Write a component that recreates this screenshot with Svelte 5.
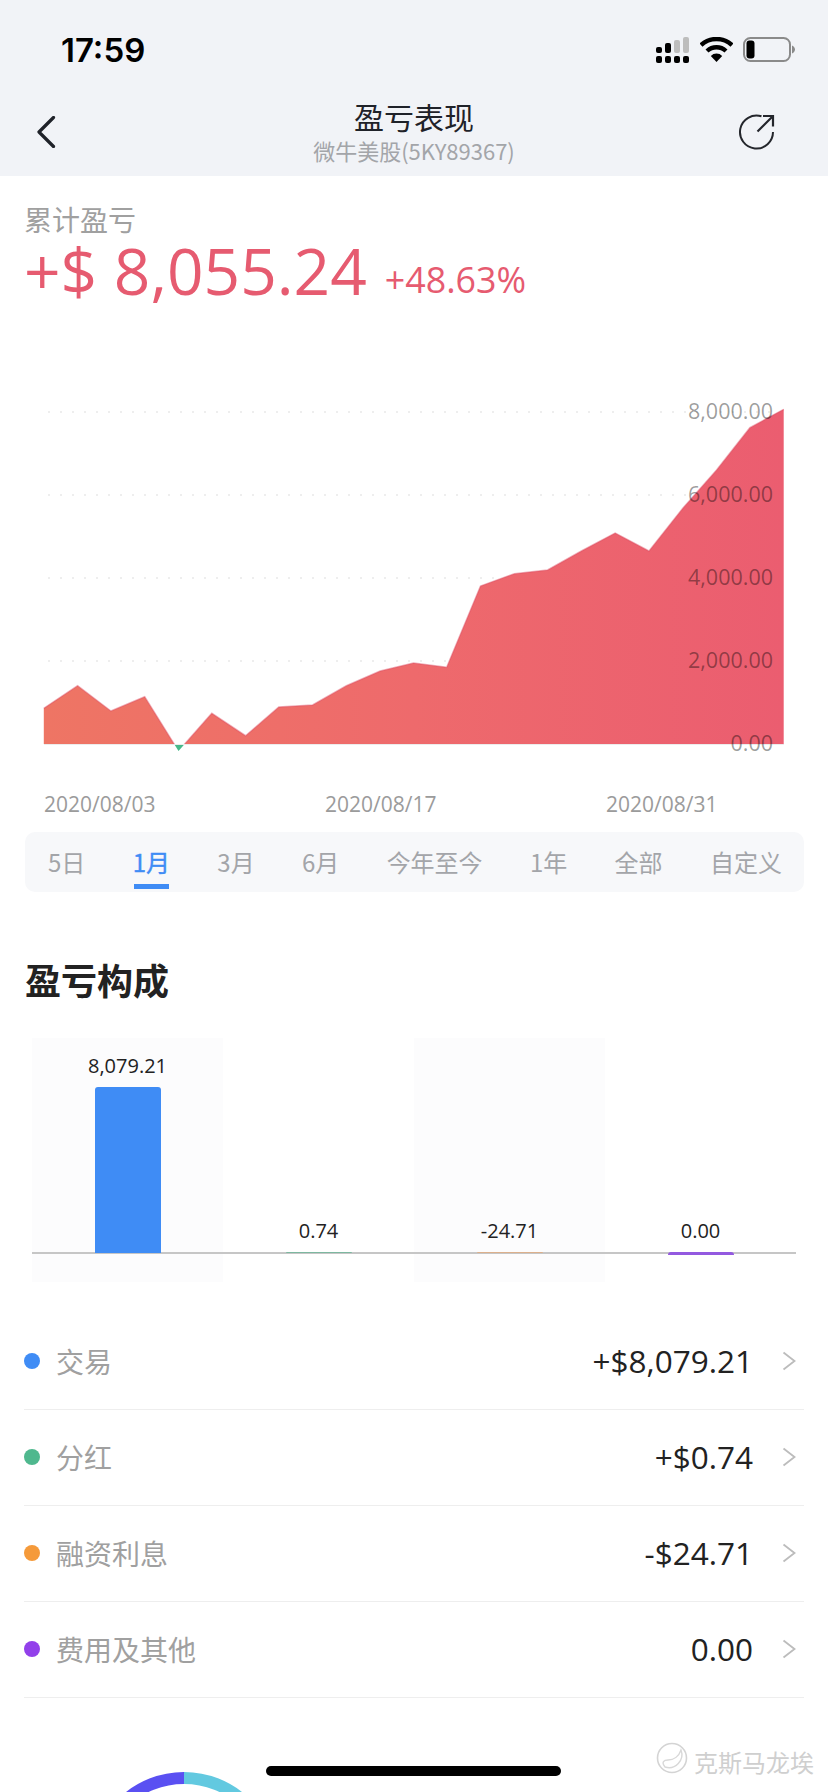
<script>
  const raw = [[83,985],[147,917],[210,993],[274,950],[338,1113],[401,1000],[465,1067],[528,981],[592,975],[656,917],[720,873],[783,849],[846,862],[910,618],[974,581],[1037,570],[1101,513],[1165,459],[1229,513],[1293,385],[1357,270],[1420,143],[1484,88]];
  // chart svg starts at page y=400
  const pts = raw.map(([x, y]) => [+(x / 1.8937).toFixed(1), +(380 + y / 3 - 400).toFixed(1)]);
  const base = 344;
  const ridge = pts.map((p) => `${p[0]},${p[1]}`).join(' ');
  const area = `M${pts[0][0]},${base} ` + pts.map((p) => `L${p[0]},${p[1]}`).join(' ') + ` L${pts[pts.length - 1][0]},${base} Z`;
  const axis = [['8,000.00', 12], ['6,000.00', 95], ['4,000.00', 178], ['2,000.00', 261], ['0.00', 344]];
  const dates = [['2020/08/03', 44], ['2020/08/17', 325], ['2020/08/31', 606]];
  const tabs = ['5日', '1月', '3月', '6月', '今年至今', '1年', '全部', '自定义'];
  const cols = [
    { label: '8,079.21', h: 166, drop: 0, color: '#3f8cf5', band: true },
    { label: '0.74', h: 1, drop: 0, color: '#7db8a0', band: false },
    { label: '-24.71', h: 1, drop: 0, color: '#dcb08c', band: true },
    { label: '0.00', h: 3, drop: 2, color: '#9359e0', band: false }
  ];
  const rows = [
    { name: '交易', value: '+$8,079.21', color: '#3f8cf5' },
    { name: '分红', value: '+$0.74', color: '#4fb88e' },
    { name: '融资利息', value: '-$24.71', color: '#f59a3a' },
    { name: '费用及其他', value: '0.00', color: '#9240ea' }
  ];
</script>

<div class="page">
  <header class="top">
    <div class="status">
      <span class="time">17:59</span>
      <div class="status-icons">
        <svg width="33" height="26" viewBox="0 0 33 26">
          <g fill="#000">
            <rect x="0" y="10" width="6" height="6" rx="2" />
            <rect x="9" y="6" width="6" height="10" rx="2" />
            <rect x="0" y="19" width="6" height="7" rx="2" />
            <rect x="9" y="19" width="6" height="7" rx="2" />
            <rect x="18" y="19" width="6" height="7" rx="2" />
            <rect x="27" y="19" width="6" height="7" rx="2" />
          </g>
          <g fill="#bdbdbd">
            <rect x="18" y="3" width="6" height="13" rx="2" />
            <rect x="27" y="0" width="6" height="16" rx="2" />
          </g>
        </svg>
        <svg class="wifi" width="33" height="25" viewBox="0 0 33 25">
          <path d="M1 8 A23 23 0 0 1 32 8" fill="none" stroke="#000" stroke-width="4.4" />
          <path d="M7 14 A14 14 0 0 1 26 14" fill="none" stroke="#000" stroke-width="4.4" />
          <path d="M16.5 25 L10.8 19 A8 8 0 0 1 22.2 19 Z" fill="#000" />
        </svg>
        <svg class="battery" width="52" height="25" viewBox="0 0 52 25">
          <rect x="1" y="1" width="46" height="23" rx="6.5" fill="none" stroke="#8a8a8a" stroke-width="2" />
          <rect x="3.5" y="3.5" width="8" height="18" rx="3" fill="#000" />
          <path d="M49 8.5 C51 9.5 52 11 52 12.5 C52 14 51 15.5 49 16.5 Z" fill="#8a8a8a" />
        </svg>
      </div>
    </div>
    <nav class="nav">
      <svg class="back" width="20" height="32" viewBox="0 0 20 32">
        <path d="M17.5 1.5 L3 16 L17.5 30.5" fill="none" stroke="#1f2229" stroke-width="3.2" stroke-linecap="round" stroke-linejoin="round" />
      </svg>
      <div class="nav-title">
        <div class="title">盈亏表现</div>
        <div class="subtitle">微牛美股(5KY89367)</div>
      </div>
      <svg class="share" width="38" height="38" viewBox="0 0 38 38">
        <path d="M23.5 4.3 A16.5 16.5 0 1 0 35 20" fill="none" stroke="#24262c" stroke-width="2" />
        <path d="M19.5 19.5 L35 4 M25 4 H35 V14.5" fill="none" stroke="#24262c" stroke-width="2.2" />
      </svg>
    </nav>
  </header>

  <section class="summary">
    <div class="sum-label">累计盈亏</div>
    <div class="sum-values">
      <span class="amount">+$ 8,055.24</span>
      <span class="percent">+48.63%</span>
    </div>
  </section>

  <svg class="chart" width="828" height="420" viewBox="0 0 828 420">
    <defs>
      <linearGradient id="areaGrad" x1="44" x2="784" y1="0" y2="0" gradientUnits="userSpaceOnUse">
        <stop offset="0" stop-color="#ee7564" />
        <stop offset="0.5" stop-color="#ee6a6c" />
        <stop offset="1" stop-color="#eb5d70" />
      </linearGradient>
      <clipPath id="above"><rect x="0" y="0" width="828" height={base} /></clipPath>
      <clipPath id="below"><rect x="0" y={base} width="828" height="40" /></clipPath>
    </defs>
    {#each axis as [, y]}
      {#if y !== base}
        <line x1="48" x2="780" y1={y} y2={y} stroke="#e9e9e9" stroke-width="1.5" stroke-dasharray="2 10" />
      {/if}
    {/each}
    <path d={area} fill="#47b98a" clip-path="url(#below)" />
    <path d={area} fill="url(#areaGrad)" clip-path="url(#above)" />
    <polyline points={ridge} fill="none" stroke="#dc4c62" stroke-opacity="0.45" stroke-width="1.5" clip-path="url(#above)" />
    <line x1="44" x2="784" y1={base + 0.5} y2={base + 0.5} stroke="#ececec" stroke-width="1" />
    {#each axis as [label, y]}
      <text class="axis-label" x="773" y={y + 7} text-anchor="end">{label}</text>
    {/each}
    {#each dates as [label, x]}
      <text class="date-label" x={x} y="412">{label}</text>
    {/each}
  </svg>

  <div class="tabs">
    {#each tabs as t, i}
      <span class="tab" class:active={i === 1}>{t}</span>
    {/each}
  </div>

  <h2 class="heading">盈亏构成</h2>

  <div class="bars">
    {#each cols as c}
      <div class="col" class:band={c.band}>
        <div class="bar-label">{c.label}</div>
        <div class="bar" style="height:{c.h}px;margin-bottom:{-c.drop}px;background:{c.color}"></div>
      </div>
    {/each}
  </div>

  <ul class="list">
    {#each rows as r}
      <li class="row">
        <span class="dot" style="background:{r.color}"></span>
        <span class="name">{r.name}</span>
        <span class="value">{r.value}</span>
        <svg class="chev" width="14" height="20" viewBox="0 0 14 20">
          <path d="M1.5 1.5 L12.5 10 L1.5 18.5" fill="none" stroke="#bcbcbc" stroke-width="1.8" />
        </svg>
      </li>
    {/each}
  </ul>

  <svg class="donut" width="188" height="188" viewBox="0 0 188 188">
    <path d="M94 6 A88 88 0 0 0 6 94" fill="none" stroke="#5a50f2" stroke-width="12" />
    <path d="M94 6 A88 88 0 0 1 182 94" fill="none" stroke="#62c9e0" stroke-width="12" />
  </svg>

  <div class="home"></div>

  <div class="watermark">
    <svg width="32" height="32" viewBox="0 0 32 32">
      <circle cx="16" cy="16" r="14.5" fill="none" stroke="#d4d4d4" stroke-width="1.6" />
      <path d="M25 8 A13 13 0 0 1 9 25 C5 20 8 18 12 18 C18 18 23 14 25 8 Z" fill="none" stroke="#d8d8d8" stroke-width="1.4" />
    </svg>
    <span>克斯马龙埃</span>
  </div>
</div>

<style>
  :global(body) { margin: 0; background: #fff; }
  .page {
    position: relative;
    width: 828px;
    height: 1792px;
    overflow: hidden;
    background: #fff;
    font-family: "Noto Sans CJK SC", "Noto Sans", sans-serif;
    color: #222;
  }
  .top { height: 176px; background: #f1f3f7; }
  .status {
    height: 88px;
    box-sizing: border-box;
    padding: 33px 33px 0 61px;
    display: flex;
    justify-content: space-between;
    align-items: flex-start;
  }
  .time {
    font-family: Inter, "Liberation Sans", sans-serif;
    font-weight: 600;
    font-size: 33px;
    line-height: 34px;
    color: #000;
  }
  .status-icons { display: flex; align-items: flex-start; margin-top: 4px; }
  .status-icons svg { display: block; }
  .wifi { margin-left: 11px; }
  .battery { margin-left: 10px; }
  .nav {
    height: 88px;
    display: grid;
    grid-template-columns: 1fr auto 1fr;
    align-items: start;
    padding: 0 52px 0 36px;
  }
  .back { display: block; margin-top: 28px; }
  .share { display: block; margin-top: 24px; justify-self: end; }
  .nav-title { text-align: center; padding-top: 9px; margin-left: 16px; }
  .title { font-size: 30px; line-height: 38px; color: #1f2229; }
  .subtitle { font-size: 22px; line-height: 30px; color: #a3a5a9; }
  .summary { padding: 27px 24px 0; height: 120px; box-sizing: border-box; }
  .sum-label { font-size: 28px; line-height: 32px; color: #a0a0a0; }
  .sum-values {
    display: flex;
    align-items: flex-end;
    margin-top: 3px;
    font-family: "Open Sans", "Noto Sans", sans-serif;
    color: #e65b70;
    white-space: nowrap;
  }
  .amount { font-size: 64px; line-height: 66px; }
  .percent { font-size: 35.8px; line-height: 50px; margin-left: 18px; }
  .chart { display: block; margin-top: 104px; }
  .axis-label { font-family: "Open Sans", sans-serif; font-size: 21.5px; fill: #000; fill-opacity: 0.4; }
  .date-label { font-family: "Open Sans", sans-serif; font-size: 21px; fill: #9b9b9b; }
  .tabs {
    margin: 12px 24px 0 25px;
    height: 60px;
    box-sizing: border-box;
    padding: 0 22px 0 23px;
    display: flex;
    justify-content: space-between;
    align-items: stretch;
    background: #f7f8fa;
    border-radius: 10px;
  }
  .tab {
    position: relative;
    font-size: 24px;
    line-height: 60px;
    color: #a3a5a9;
  }
  .tab.active { color: #3f8cf5; -webkit-text-stroke: 0.4px #3f8cf5; }
  .tab.active::after {
    content: "";
    position: absolute;
    left: 1px;
    right: 1px;
    bottom: 3px;
    height: 5px;
    background: #3f8cf5;
  }
  .heading {
    margin: 67px 25px 0;
    font-size: 36px;
    line-height: 40px;
    font-weight: 700;
    color: #222;
  }
  .bars {
    margin: 39px 32px 0;
    height: 244px;
    display: grid;
    grid-template-columns: repeat(4, 1fr);
    position: relative;
  }
  .bars::after {
    content: "";
    position: absolute;
    left: 0;
    right: 0;
    top: 214px;
    height: 2px;
    background: #c6c6c6;
  }
  .col {
    position: relative;
    display: flex;
    flex-direction: column;
    align-items: center;
    justify-content: flex-end;
    padding-bottom: 29px;
  }
  .col.band { background: #fcfcfd; }
  .bar-label {
    font-family: "Open Sans", sans-serif;
    font-size: 20px;
    line-height: 28px;
    margin-bottom: 7px;
    color: #222;
  }
  .bar {
    width: 66px;
    border-radius: 3px 3px 0 0;
    position: relative;
    z-index: 1;
  }
  .list { list-style: none; margin: 32px 24px 0; padding: 0; }
  .row {
    height: 96px;
    box-sizing: border-box;
    padding-bottom: 2px;
    border-bottom: 1px solid #eeeeee;
    display: flex;
    align-items: center;
  }
  .dot { width: 16px; height: 16px; border-radius: 50%; flex: none; }
  .name { margin-left: 16px; font-size: 28px; color: #a0a0a0; }
  .value { margin-left: auto; font-family: "Open Sans", sans-serif; font-size: 31.5px; color: #222; }
  .chev { display: block; margin-left: 29px; margin-right: 8px; flex: none; }
  .donut { position: absolute; left: 90px; top: 1772px; }
  .home {
    position: absolute;
    left: 266px;
    top: 1766px;
    width: 295px;
    height: 10px;
    border-radius: 5px;
    background: #000;
  }
  .watermark {
    position: absolute;
    left: 656px;
    top: 1742px;
    display: flex;
    align-items: flex-start;
    gap: 6px;
    color: #cfcfcf;
    font-size: 24px;
    line-height: 32px;
    white-space: nowrap;
  }
  .watermark span { margin-top: 4px; }
  .watermark svg { display: block; }
</style>
